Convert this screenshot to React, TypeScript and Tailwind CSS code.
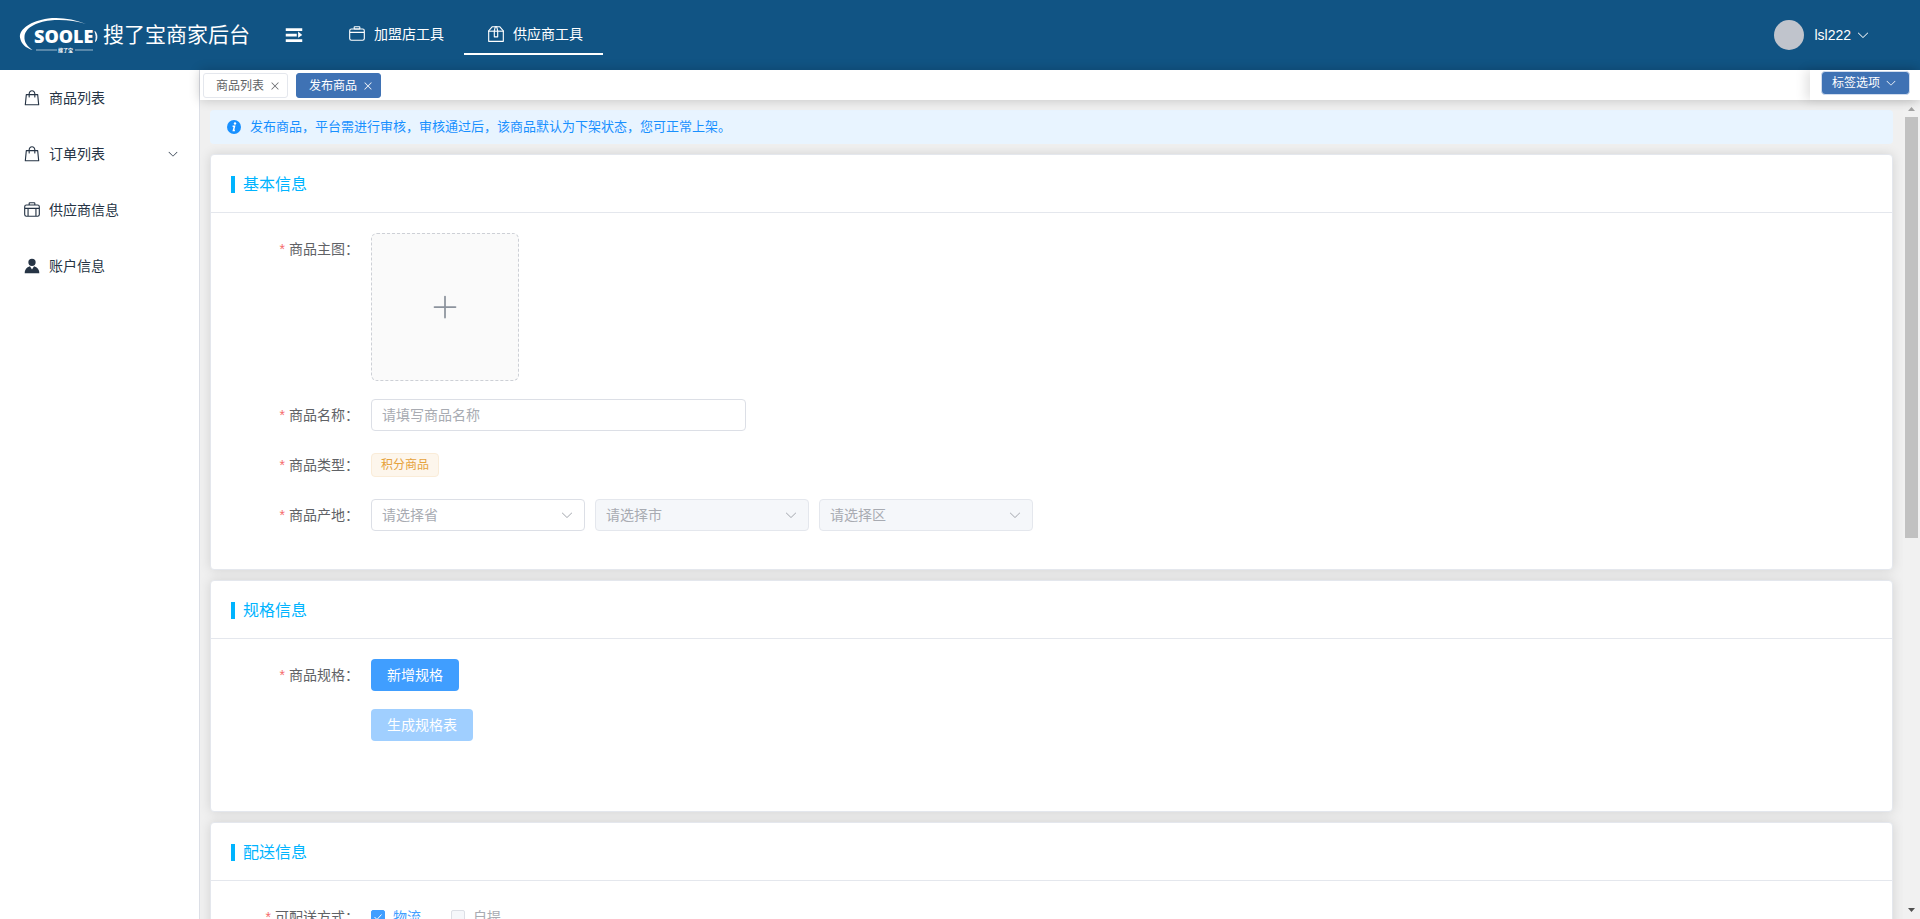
import { useState } from "react";
import type { ReactNode } from "react";

/** Icon paths, all drawn on a 1024 grid */
const ICONS = {
    goods: [
        "M320 288v-22.336C320 154.688 405.504 64 512 64s192 90.688 192 201.664v22.4h131.072a32 32 0 0 1 31.808 28.8l57.6 576a32 32 0 0 1-31.808 35.2H131.328a32 32 0 0 1-31.808-35.2l57.6-576a32 32 0 0 1 31.808-28.8H320zm64 0h256v-22.336C640 189.248 582.272 128 512 128c-70.272 0-128 61.248-128 137.664v22.4zm-64 64H217.92l-51.2 512h690.56l-51.264-512H704v96a32 32 0 1 1-64 0v-96H384v96a32 32 0 0 1-64 0z",
    ],
    suitcase: [
        "M128 384h768v-64a64 64 0 0 0-64-64H192a64 64 0 0 0-64 64v64zm0 64v320a64 64 0 0 0 64 64h640a64 64 0 0 0 64-64V448H128zm64-256h640a128 128 0 0 1 128 128v448a128 128 0 0 1-128 128H192A128 128 0 0 1 64 768V320a128 128 0 0 1 128-128z",
        "M384 128v64h256v-64H384zm0-64h256a64 64 0 0 1 64 64v64a64 64 0 0 1-64 64H384a64 64 0 0 1-64-64v-64a64 64 0 0 1 64-64z",
    ],
    suitcaseLine: [
        "M192 192h128v-64a64 64 0 0 1 64-64h256a64 64 0 0 1 64 64v64h128a128 128 0 0 1 128 128v448a128 128 0 0 1-128 128H192A128 128 0 0 1 64 768V320a128 128 0 0 1 128-128zm192 0h256v-64H384zM128 384h768v-64a64 64 0 0 0-64-64H192a64 64 0 0 0-64 64zm0 64v320a64 64 0 0 0 64 64h64V448zm192 0v384h384V448zm448 0v384h64a64 64 0 0 0 64-64V448z",
    ],
    box: [
        "M317.056 128 128 344.064V896h768V344.064L706.944 128H317.056zm-14.528-64h418.944a32 32 0 0 1 24.064 10.88l206.528 236.096A32 32 0 0 1 960 332.032V928a32 32 0 0 1-32 32H96a32 32 0 0 1-32-32V332.032a32 32 0 0 1 7.936-21.12L278.4 75.008A32 32 0 0 1 302.528 64z",
        "M64 320h896v64H64z",
        "M448 327.872V640h128V327.872L526.08 128h-28.16L448 327.872zM448 64h128l64 256v352a32 32 0 0 1-32 32H416a32 32 0 0 1-32-32V320l64-256z",
    ],
    avatar: [
        "M628.736 528.896A416 416 0 0 1 928 928H96a415.872 415.872 0 0 1 299.264-399.104L512 704l116.736-175.104zM720 304a208 208 0 1 1-416 0 208 208 0 0 1 416 0z",
    ],
    expand: ["M128 192h768v128H128V192zm0 256h512v128H128V448zm0 256h768v128H128V704zm576-352 192 160-192 128V352z"],
    arrowDown: [
        "M831.872 340.864 512 652.672 192.128 340.864a30.592 30.592 0 0 0-42.752 0 29.12 29.12 0 0 0 0 41.6L489.664 714.24a32 32 0 0 0 44.672 0l340.288-331.712a29.12 29.12 0 0 0 0-41.728 30.592 30.592 0 0 0-42.752 0z",
    ],
    close: [
        "M764.288 214.592 512 466.88 259.712 214.592a31.936 31.936 0 0 0-45.12 45.12L466.752 512 214.528 764.224a31.936 31.936 0 1 0 45.12 45.184L512 557.184l252.288 252.288a31.936 31.936 0 0 0 45.12-45.12L557.12 512.064l252.288-252.352a31.936 31.936 0 1 0-45.12-45.184z",
    ],
    plus: ["M480 480V128a32 32 0 0 1 64 0v352h352a32 32 0 1 1 0 64H544v352a32 32 0 1 1-64 0V544H128a32 32 0 0 1 0-64z"],
};

type IconName = keyof typeof ICONS;

function Icon({ name, className }: { name: IconName; className: string }) {
    return (
        <svg viewBox="0 0 1024 1024" className={`shrink-0 ${className}`} fill="currentColor" fillRule="evenodd" aria-hidden="true">
            {ICONS[name].map((d) => (
                <path key={d} d={d} />
            ))}
        </svg>
    );
}

function Logo() {
    return (
        <svg viewBox="0 0 80 38" className="h-[38px] w-20 shrink-0" fill="#fff" role="img" aria-label="SOOLE">
            <path d="M68 8C56 3 42 1 30 2.500C13 5 1 13 2 21.500C3 28 8 32 14.500 34C9 30 6 26 6.500 20.500C7 12 18 6 32 4.500C44 3.200 57 4.500 68 8Z" />
            <path d="M77 15.500C79.500 18.500 79.500 22.500 77.500 25.500C78.400 22 78.300 19 77 15.500Z" stroke="#fff" strokeWidth="0.8" />
            <text x="16" y="27" fontSize="18" fontWeight="800" fontFamily="'Open Sans', sans-serif">
                SOOLE
            </text>
            <path d="M18 33.500h21v1H18zM57 33.500h18v1H57z" opacity="0.6" />
            <text x="40" y="36" fontSize="5" fontWeight="700" fontFamily="'Noto Sans CJK SC', sans-serif">
                搜了宝
            </text>
        </svg>
    );
}

const NAV: { icon: IconName; text: string; active?: boolean }[] = [
    { icon: "suitcase", text: "加盟店工具" },
    { icon: "box", text: "供应商工具", active: true },
];

const MENU: { icon: IconName; text: string; sub?: boolean }[] = [
    { icon: "goods", text: "商品列表" },
    { icon: "goods", text: "订单列表", sub: true },
    { icon: "suitcaseLine", text: "供应商信息" },
    { icon: "avatar", text: "账户信息" },
];

function Header() {
    return (
        <header className="flex h-[70px] shrink-0 items-center bg-[#115484] text-white">
            <div className="flex items-center pl-[18px]">
                <Logo />
                <h1 className="ml-[5px] text-[21px] leading-8 font-normal">搜了宝商家后台</h1>
            </div>
            <button type="button" aria-label="折叠菜单" className="ml-[33px]">
                <Icon name="expand" className="size-[22px]" />
            </button>
            <nav className="ml-5 flex">
                {NAV.map((n) => (
                    <a
                        key={n.text}
                        href="#"
                        className={`flex h-10 items-center border-b-2 px-5 text-sm ${n.active ? "border-white" : "border-transparent"}`}
                    >
                        <span className="mr-[5px] flex w-6 justify-center">
                            <Icon name={n.icon} className="size-[18px]" />
                        </span>
                        {n.text}
                    </a>
                ))}
            </nav>
            <button type="button" className="mr-[50px] ml-auto flex items-center text-sm">
                <span className="mr-[10px] size-[30px] rounded-full bg-[#c0c4cc]" />
                lsl222
                <Icon name="arrowDown" className="ml-[5px] size-[14px]" />
            </button>
        </header>
    );
}

function Sidebar() {
    return (
        <aside className="w-[200px] shrink-0 border-r border-[#dcdfe6] bg-white">
            {MENU.map((m) => (
                <a key={m.text} href="#" className="flex h-14 items-center px-5 text-sm text-[#263445]">
                    <span className="mr-[5px] flex w-6 justify-center">
                        <Icon name={m.icon} className="size-[18px]" />
                    </span>
                    {m.text}
                    {m.sub && <Icon name="arrowDown" className="ml-auto size-3" />}
                </a>
            ))}
        </aside>
    );
}

function TabBar() {
    return (
        <div className="relative z-10 flex h-[30px] shrink-0 bg-white shadow-[0_0_12px_rgba(0,0,0,0.2)]">
            <div className="flex flex-1 items-center gap-2 pt-[1px] pl-[3px] text-xs">
                <div className="flex h-[25px] items-center rounded-[3px] border border-[#e4e7ed] pr-[6px] pl-3 text-[#606266]">
                    <a href="#">商品列表</a>
                    <button type="button" aria-label="关闭商品列表" className="ml-[5px]">
                        <Icon name="close" className="size-3" />
                    </button>
                </div>
                <div className="flex h-[25px] items-center rounded-[3px] border border-[#3f72b4] bg-[#3f72b4] pr-[6px] pl-3 text-white">
                    <a href="#">发布商品</a>
                    <button type="button" aria-label="关闭发布商品" className="ml-[5px]">
                        <Icon name="close" className="size-3" />
                    </button>
                </div>
            </div>
            <div className="flex w-[110px] items-start justify-end pt-[1px] pr-[10px] shadow-[-4px_0_12px_rgba(0,0,0,0.12)]">
                <button type="button" className="flex h-6 items-center rounded-sm border border-[#d0dcee] bg-[#3f72b4] pr-3 pl-[10px] text-xs text-white">
                    标签选项
                    <Icon name="arrowDown" className="ml-[5px] size-3" />
                </button>
            </div>
        </div>
    );
}

function Card({ title, children }: { title: string; children: ReactNode }) {
    return (
        <section className="mt-[10px] rounded border border-[#e4e7ed] bg-white shadow-[0_0_12px_rgba(0,0,0,0.12)]">
            <div className="border-b border-[#e4e7ed] px-5 pt-[21px] pb-[19px]">
                <h2 className="border-l-4 border-[#00b4ff] pl-2 text-base leading-[17px] font-normal text-[#00b4ff]">{title}</h2>
            </div>
            <div className="flex flex-col gap-[18px] px-5 pt-5 pb-[38px]">{children}</div>
        </section>
    );
}

function Row({ label, htmlFor, children }: { label?: string; htmlFor?: string; children: ReactNode }) {
    return (
        <div className="flex">
            <div className="w-[140px] shrink-0 pr-3 text-right text-sm leading-8 text-[#606266]">
                {label && (
                    <label htmlFor={htmlFor}>
                        <span className="mr-1 text-[#f56c6c]">*</span>
                        {label}：
                    </label>
                )}
            </div>
            <div className="flex min-h-8 flex-1 items-center gap-[10px]">{children}</div>
        </div>
    );
}

function AreaSelect({ id, placeholder, disabled }: { id: string; placeholder: string; disabled?: boolean }) {
    return (
        <div className="relative w-[214px]">
            <select
                id={id}
                disabled={disabled}
                aria-label={placeholder}
                className={`h-8 w-full appearance-none rounded border pl-[10px] text-sm text-[#a8abb2] opacity-100 ${
                    disabled ? "border-[#e4e7ed] bg-[#f5f7fa]" : "border-[#dcdfe6] bg-white"
                }`}
            >
                <option>{placeholder}</option>
            </select>
            <Icon name="arrowDown" className="pointer-events-none absolute top-[9px] right-[11px] size-[14px] text-[#a8abb2]" />
        </div>
    );
}

function Checkbox({ text, checked, disabled, onChange }: { text: string; checked: boolean; disabled?: boolean; onChange?: () => void }) {
    return (
        <label className={`relative mr-5 flex items-center gap-2 text-sm ${checked ? "text-[#409eff]" : "text-[#a8abb2]"}`}>
            <input
                type="checkbox"
                checked={checked}
                disabled={disabled}
                onChange={onChange}
                className="size-[14px] appearance-none rounded-xs border border-[#dcdfe6] bg-[#f5f7fa] checked:border-[#409eff] checked:bg-[#409eff]"
            />
            {checked && (
                <svg viewBox="0 0 14 14" className="pointer-events-none absolute left-0 size-[14px]" fill="none" stroke="#fff" aria-hidden="true">
                    <path d="M3.500 7 6 9.500l4.500-5" />
                </svg>
            )}
            {text}
        </label>
    );
}

function ScrollBar() {
    return (
        <div className="flex w-[17px] shrink-0 flex-col items-center bg-[#f1f1f1]" aria-hidden="true">
            <svg viewBox="0 0 17 17" className="size-[17px]" fill="#a3a3a3">
                <path d="M5 11h7L8.500 7z" />
            </svg>
            <div className="w-full flex-1 px-[2px]">
                <div className="h-[421px] bg-[#c1c1c1]" />
            </div>
            <svg viewBox="0 0 17 17" className="size-[17px]" fill="#505050">
                <path d="M5 6h7l-3.500 4z" />
            </svg>
        </div>
    );
}

export default function App() {
    const [express, setExpress] = useState(true);

    return (
        <div className="flex h-screen flex-col overflow-hidden bg-[#f0f0f0] font-['Liberation_Sans','Noto_Sans_CJK_SC',sans-serif]">
            <Header />
            <div className="flex min-h-0 flex-1">
                <Sidebar />
                <div className="flex min-w-0 flex-1 flex-col">
                    <TabBar />
                    <div className="flex min-h-0 flex-1">
                        <main className="min-w-0 flex-1 overflow-hidden p-[10px]">
                            {/* Audit notice */}
                            <div className="flex h-[34px] items-center rounded bg-[#e8f4ff] px-4 text-[13px] text-[#1890ff]">
                                <svg viewBox="0 0 16 16" className="mr-2 size-4 shrink-0" aria-hidden="true">
                                    <circle cx="8" cy="8" r="7" fill="#1890ff" />
                                    <circle cx="9" cy="4.500" r="1.200" fill="#fff" />
                                    <path d="M6.600 7.200h1.900l-1.100 4.300h1.500" fill="none" stroke="#fff" strokeWidth="1.500" />
                                </svg>
                                <p>发布商品，平台需进行审核，审核通过后，该商品默认为下架状态，您可正常上架。</p>
                            </div>

                            <Card title="基本信息">
                                <Row label="商品主图" htmlFor="picture">
                                    <button
                                        id="picture"
                                        type="button"
                                        aria-label="上传商品主图"
                                        className="flex size-[148px] items-center justify-center rounded-md border border-dashed border-[#cdd0d6] bg-[#fafafa]"
                                    >
                                        <Icon name="plus" className="size-7 text-[#8c939d]" />
                                    </button>
                                </Row>
                                <Row label="商品名称" htmlFor="name">
                                    <input
                                        id="name"
                                        type="text"
                                        placeholder="请填写商品名称"
                                        className="h-8 w-[375px] rounded border border-[#dcdfe6] px-[10px] text-sm text-[#606266] placeholder:text-[#a8abb2]"
                                    />
                                </Row>
                                <Row label="商品类型">
                                    <span className="flex h-6 items-center rounded border border-[#faecd8] bg-[#fdf6ec] px-[9px] text-xs text-[#e6a23c]">
                                        积分商品
                                    </span>
                                </Row>
                                <Row label="商品产地" htmlFor="province">
                                    <AreaSelect id="province" placeholder="请选择省" />
                                    <AreaSelect id="city" placeholder="请选择市" disabled />
                                    <AreaSelect id="district" placeholder="请选择区" disabled />
                                </Row>
                            </Card>

                            <Card title="规格信息">
                                <Row label="商品规格" htmlFor="add-spec">
                                    <button id="add-spec" type="button" className="h-8 rounded bg-[#409eff] px-4 text-sm text-white">
                                        新增规格
                                    </button>
                                </Row>
                                <Row>
                                    <button type="button" disabled className="h-8 rounded bg-[#a0cfff] px-4 text-sm text-white">
                                        生成规格表
                                    </button>
                                </Row>
                                {/* Spec table goes here once generated */}
                                <div className="min-h-[14px]" />
                            </Card>

                            <Card title="配送信息">
                                <Row label="可配送方式">
                                    <Checkbox text="物流" checked={express} onChange={() => setExpress(!express)} />
                                    <Checkbox text="自提" checked={false} disabled />
                                </Row>
                            </Card>
                        </main>
                        <ScrollBar />
                    </div>
                </div>
            </div>
        </div>
    );
}
